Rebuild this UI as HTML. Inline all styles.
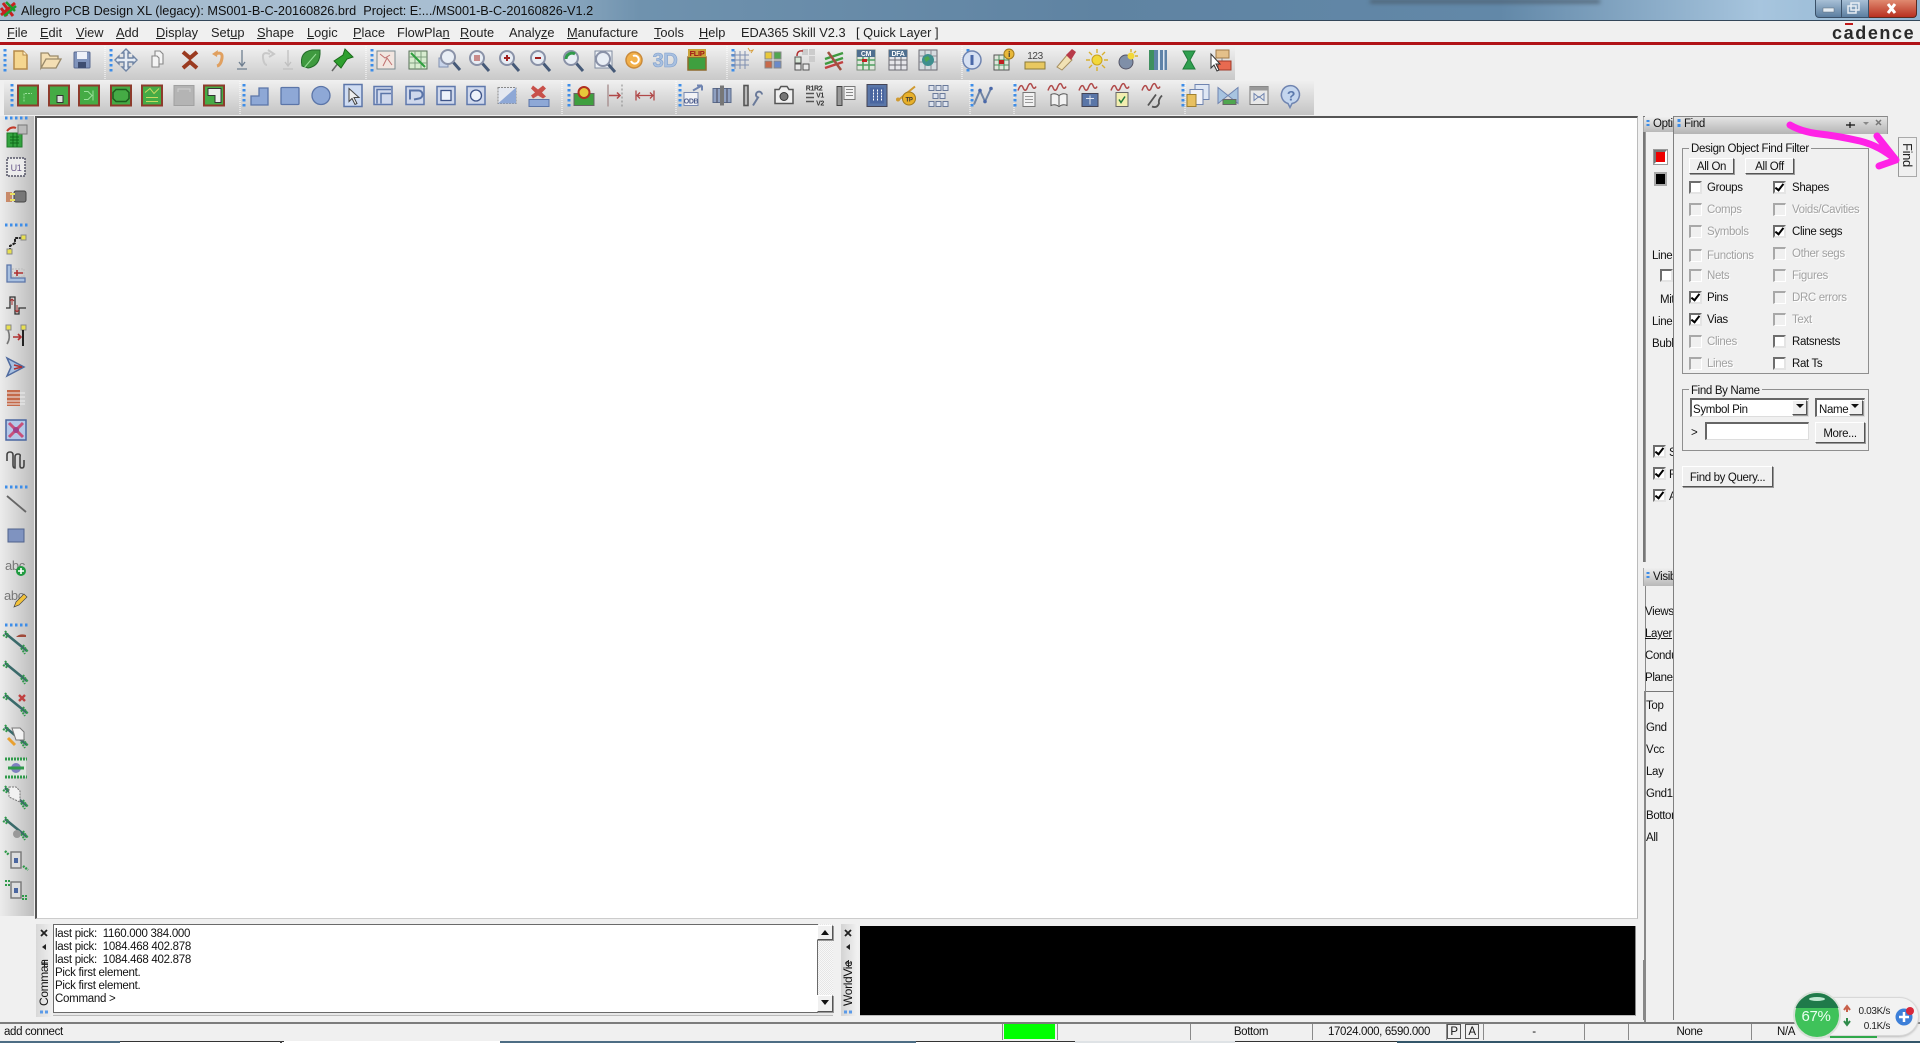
<!DOCTYPE html>
<html><head><meta charset="utf-8"><title>Allegro PCB Design XL</title>
<style>
html,body{margin:0;padding:0;width:1920px;height:1043px;overflow:hidden;background:#f0f0f0}
body{position:relative;font:11.5px/14px "Liberation Sans",sans-serif;letter-spacing:-.35px;color:#111}
div,span.a{position:absolute;box-sizing:border-box}
.t{position:absolute;white-space:nowrap;line-height:14px;margin-top:1px}
.d{color:#a2a2a2;text-shadow:1px 1px 0 #fff}
.c{position:absolute;width:13px;height:13px;background:#fff;border:2px solid;border-color:#6e6e6e #e4e4e4 #e4e4e4 #6e6e6e}
.x{background:#f0f0f0;border-color:#a8a8a8 #fff #fff #a8a8a8;border-width:2px 1px 1px 2px}
.k::after{content:"";position:absolute;left:2px;top:-1px;width:3px;height:7px;border:solid #000;border-width:0 2px 2px 0;transform:rotate(38deg)}
.b{position:absolute;background:#f0f0f0;border:1px solid;border-color:#fff #555 #555 #fff;box-shadow:1px 1px 0 #999;text-align:center;line-height:16px}
.g{position:absolute;border:1px solid #8f8f8f}
.l{position:absolute;background:#f0f0f0;padding:0 2px;white-space:nowrap;line-height:14px;margin-top:1px}
.in{position:absolute;background:#fff;border:1px solid;border-color:#666 #ddd #ddd #666;border-width:2px 1px 1px 2px}
.m{position:absolute;top:25px;font-size:12.8px;line-height:15px;letter-spacing:0;white-space:nowrap;color:#222}
.s{position:absolute;top:1024px;height:16px;text-align:center;line-height:16px;white-space:nowrap}
.v{position:absolute;top:1024px;width:1px;height:16px;background:#8a8a8a}
u{text-decoration:underline}
</style></head><body>

<!-- title bar -->
<div style="left:0;top:0;width:1920px;height:21px;background:linear-gradient(90deg,#a3b9cc 0,#a9bfd2 480px,#6f92ae 640px,#5f83a2 1100px,#6288a8 1500px,#a7c5de 1760px,#8fb3d0 1920px);border-bottom:1px solid #33475a"></div>
<div style="left:1370px;top:0;width:230px;height:3px;background:#4a5a68;filter:blur(2px)"></div>
<div class="t" style="left:21px;top:3px;font-size:12.7px;letter-spacing:0;color:#111">Allegro PCB Design XL (legacy): MS001-B-C-20160826.brd&nbsp; Project: E:.../MS001-B-C-20160826-V1.2</div>
<svg style="position:absolute;left:0;top:0" width="18" height="20"><path d="M1 15L15 3M3 3l10 13M1 8l6 8" stroke="#c82020" stroke-width="3" fill="none"/><path d="M4 16L16 6M6 2l9 9" stroke="#1c9c2c" stroke-width="2.5" fill="none"/></svg>
<div style="left:1815px;top:0;width:27px;height:18px;background:linear-gradient(#a8c0d6,#5c7ea0);border:1px solid #3a5068;border-top:0;border-radius:0 0 0 4px"></div>
<div style="left:1842px;top:0;width:27px;height:18px;background:linear-gradient(#a8c0d6,#5c7ea0);border:1px solid #3a5068;border-top:0;border-left:0"></div>
<div style="left:1869px;top:0;width:48px;height:18px;background:linear-gradient(#e08a70,#b83020);border:1px solid #5a2a20;border-top:0;border-left:0;border-radius:0 0 4px 0"></div>
<svg style="position:absolute;left:1815px;top:0" width="102" height="18"><rect x="8" y="8" width="11" height="4" fill="#e4ecf3" stroke="#5a6a7a" stroke-width=".5"/><rect x="33" y="6" width="8" height="7" fill="none" stroke="#e8eef4" stroke-width="1.5"/><rect x="36" y="3" width="8" height="7" fill="none" stroke="#e8eef4" stroke-width="1.5"/><path d="M73 4l7 9M80 4l-7 9" stroke="#fff" stroke-width="3"/></svg>

<!-- menu -->
<div class="m" style="left:7px"><u>F</u>ile</div>
<div class="m" style="left:40px"><u>E</u>dit</div>
<div class="m" style="left:76px"><u>V</u>iew</div>
<div class="m" style="left:116px"><u>A</u>dd</div>
<div class="m" style="left:156px"><u>D</u>isplay</div>
<div class="m" style="left:211px">Set<u>u</u>p</div>
<div class="m" style="left:257px"><u>S</u>hape</div>
<div class="m" style="left:307px"><u>L</u>ogic</div>
<div class="m" style="left:353px"><u>P</u>lace</div>
<div class="m" style="left:397px">FlowPla<u>n</u></div>
<div class="m" style="left:460px"><u>R</u>oute</div>
<div class="m" style="left:509px">Analy<u>z</u>e</div>
<div class="m" style="left:567px"><u>M</u>anufacture</div>
<div class="m" style="left:654px"><u>T</u>ools</div>
<div class="m" style="left:699px"><u>H</u>elp</div>
<div class="m" style="left:741px">EDA365 Skill V2.3</div>
<div class="m" style="left:856px">[ Quick Layer ]</div>
<div class="t" style="left:1832px;top:22px;font-size:18px;line-height:20px;font-weight:bold;letter-spacing:1.6px;color:#2a2a2a">cadence</div>
<div style="left:1845px;top:23px;width:8px;height:2px;background:#c01818"></div>
<div style="left:0;top:42px;width:1920px;height:3px;background:#b01217"></div>

<!-- toolbars background -->
<div style="left:0;top:46px;width:1235px;height:34px;background:linear-gradient(#f1f1f1,#c9c9c9)"></div>
<div style="left:4px;top:81px;width:1310px;height:34px;background:linear-gradient(#efefef,#c4c4c4)"></div>
<div style="left:0;top:116px;width:34px;height:800px;background:linear-gradient(90deg,#ececec,#bdbdbd)"></div>

<!-- canvas -->
<div style="left:35px;top:116px;width:1603px;height:803px;background:#fff;border-top:2px solid #555;border-left:2px solid #555;border-right:1px solid #bbb;border-bottom:1px solid #ccc"></div>

<svg style="position:absolute;left:0;top:0;filter:blur(.35px)" width="1920" height="1043">
<defs>
<symbol id="lens" overflow="visible"><path d="M3 3l7 8" stroke="#465a78" stroke-width="3"/><circle cx="-2" cy="-2" r="7" fill="#e9eef5" stroke="#8a92a8" stroke-width="2"/></symbol>
<symbol id="gb" overflow="visible"><rect x="-10" y="-10" width="20" height="20" fill="#45ab45" stroke="#8d3b2c" stroke-width="2"/></symbol>
<symbol id="bl" overflow="visible"><rect x="-9" y="-9" width="18" height="18" fill="#cfd8ec" stroke="#5f78ac" stroke-width="1.5"/></symbol>
<symbol id="wave" overflow="visible"><path d="M-11-3q3-8 5-3t4 1q3-8 5-3t4 1" fill="none" stroke="#b04848" stroke-width="1.5"/></symbol>
<symbol id="tr" overflow="visible"><path d="M-11-9L11 9" stroke="#3a6a6a" stroke-width="2.6"/><path d="M-11-11l4 5M-13-7l5 3M7 3l5 7M5 6l4 6" stroke="#2f9a4a" stroke-width="2" stroke-dasharray="2 1" fill="none"/></symbol>
</defs>

<!-- separators -->
<g stroke="#fff" stroke-dasharray="1 1"><path d="M105 46v34M366 46v34M727 46v34M962 46v34M240 81v34M562 81v34M676 81v34M970 81v34M1014 81v34M1185 81v34"/></g>
<!-- grips -->
<g stroke="#3d8de8" stroke-width="3" stroke-dasharray="2.5 2.5"><path d="M5 49v24M111 49v24M372 49v24M733 49v24M968 49v24M12 84v24M244 84v24M569 84v24M680 84v24M972 84v24M1015 84v24M1183 84v24"/><path d="M5 118h24M5 225h24M5 487h24M5 625h24"/></g>

<!-- ROW 1 -->
<g transform="translate(20,60)"><path d="M-6-9h9l4 4v14H-6z" fill="#f5d68f" stroke="#b58a4a" stroke-width="1.5"/><path d="M3-9v4h4" fill="#fff3d0" stroke="#b58a4a"/></g>
<g transform="translate(51,60)"><path d="M-10 8V-7h7l2 3h8v3H-5L-10 8zM-10 8h15l5-9H-5z" fill="#f4dfb4" stroke="#9a8a6a" stroke-width="1.3"/></g>
<g transform="translate(82,60)"><rect x="-8" y="-8" width="16" height="16" rx="1" fill="#7f93bb" stroke="#5a6a90"/><rect x="-5" y="-8" width="10" height="7" fill="#eef1f8"/><rect x="-4" y="2" width="8" height="6" fill="#3e4d70"/></g>
<g transform="translate(126,60)" fill="#e6ecf4" stroke="#6f84a4" stroke-width="1.4"><path d="M0-11l4 4H2v5h5v-2l4 4-4 4V2H2v5h2l-4 4-4-4h2V2h-5v2l-4-4 4-4v2h5v-5h-2z"/></g>
<g transform="translate(158,60)" fill="#f4f4f4" stroke="#888" stroke-width="1.1"><path d="M-3-9h5l3 3v10h-8z"/><path d="M-6-4h5l2 2v9h-7z"/></g>
<path transform="translate(190,60)" d="M-7-8l7 6 7-6M-7 8l7-6 7 6" fill="none" stroke="#9a3a20" stroke-width="4"/>
<path transform="translate(219,60)" d="M-4-6q8-3 7 4t-5 8" fill="none" stroke="#e0a060" stroke-width="3"/><path transform="translate(219,60)" d="M-1-10l-6 4 5 3z" fill="#e0a060"/>
<g transform="translate(242,60)" stroke="#6f7f90" stroke-width="1.3" fill="none"><path d="M0-10V5M-3 2l3 4 3-4M-5 9H5"/></g>
<path transform="translate(266,60)" d="M4-6q-8-3-7 4t4 7M2-10l6 4-5 3" fill="none" stroke="#c8c8c8" stroke-width="2"/>
<g transform="translate(288,60)" stroke="#c0c0c0" stroke-width="1.3" fill="none"><path d="M0-10V5M-3 2l3 4 3-4M-5 9H5"/></g>
<g transform="translate(311,60)"><path d="M-9 6q-3-14 10-16h8q1 16-12 18z" fill="#3f9a3f" stroke="#236a2a"/><path d="M-7 8L5-6" stroke="#9ae09a"/></g>
<g transform="translate(342,60)"><path d="M-10 11l7-9" stroke="#666" stroke-width="1.5"/><path d="M-8 1l9-6 2-6 8 8-6 2-6 9z" fill="#2fa02f" stroke="#1a6a1a"/></g>
<g transform="translate(386,60)"><rect x="-9" y="-9" width="18" height="18" fill="#f2e6e0" stroke="#7a8a90"/><path d="M-6-6l5 4 5-3M-3 6l4-8 5 7" stroke="#c07070" fill="none"/></g>
<g transform="translate(418,60)"><rect x="-9" y="-9" width="18" height="18" fill="#d8ecd0" stroke="#556f55"/><path d="M-9-3H9M-9 3H9M-3-9V9M3-9V9" stroke="#7f9f7f"/><path d="M-7-7L7 7" stroke="#2f9f3f" stroke-width="2"/></g>
<g transform="translate(448,60)"><rect x="-9" y="-2" width="9" height="9" fill="#c8d4ea" stroke="#7f8fb0"/><use href="#lens" x="2" y="-1"/></g>
<g transform="translate(479,60)"><use href="#lens"/><rect x="-5" y="-5" width="6" height="6" fill="#c88a8a"/></g>
<g transform="translate(509,60)"><use href="#lens"/><path d="M-5-2h6M-2-5v6" stroke="#a02020" stroke-width="2"/></g>
<g transform="translate(540,60)"><use href="#lens"/><path d="M-5-2h6" stroke="#a02020" stroke-width="2"/></g>
<g transform="translate(573,60)"><use href="#lens"/><path d="M-7-1a6 6 0 0 1 9-5" stroke="#2f9a4a" stroke-width="3" fill="none"/></g>
<g transform="translate(604,60)"><rect x="-9" y="-9" width="17" height="17" fill="#eef1f6" stroke="#7f8a9f"/><use href="#lens" x="1" y="1"/></g>
<g transform="translate(634,60)"><circle r="8" fill="#f2b04a" stroke="#c98a3a" stroke-width="1.5"/><path d="M-3 1a4 4 0 1 0 2-5" stroke="#fff" stroke-width="2" fill="none"/></g>
<text x="665" y="67" font-family="Liberation Sans" font-size="20" font-weight="bold" fill="#a8c0e0" stroke="#7f9fcc" stroke-width=".6" text-anchor="middle">3D</text>
<g transform="translate(697,60)"><rect x="-9" y="-3" width="18" height="13" fill="#3f9f3f" stroke="#8d6a2c" stroke-width="1.5"/><rect x="-9" y="-11" width="18" height="8" fill="#c9a33a"/><text y="-4" font-family="Liberation Sans" font-size="7.5" font-weight="bold" fill="#a01818" text-anchor="middle">FLIP</text></g>
<g transform="translate(741,60)" stroke="#7f8fb0" fill="none"><path d="M-10-5H8M-10 0H8M-10 5H8M-6-9V9M-1-9V9M4-9V9"/><path d="M7-12l2 3 3-1-2 3" stroke="#d8a040"/></g>
<g transform="translate(773,60)"><rect x="-8" y="-8" width="7" height="7" fill="#e8c83a" stroke="#888"/><rect x="1" y="-8" width="7" height="7" fill="#4fa64f" stroke="#888"/><rect x="-8" y="1" width="7" height="7" fill="#c86a4a" stroke="#888"/><rect x="1" y="1" width="7" height="7" fill="#6a8ac8" stroke="#888"/></g>
<g transform="translate(803,60)"><rect x="-1" y="-11" width="6" height="6" fill="#ccc"/><rect x="6" y="-11" width="6" height="6" fill="#ccc"/><rect x="6" y="-4" width="6" height="6" fill="#ccc"/><rect x="-8" y="-3" width="6" height="6" fill="#d8e8d8" stroke="#555"/><rect x="0" y="4" width="6" height="6" fill="#e8e8e8" stroke="#555"/><rect x="-8" y="4" width="6" height="6" fill="#e8e8e8" stroke="#555"/><path d="M-6-4q0-6 6-5" stroke="#b03030" fill="none" stroke-width="1.5"/></g>
<g transform="translate(834,60)" fill="none" stroke-width="2.5"><path d="M-9-1L9-7M-9 4L9-2" stroke="#3f9a3f"/><path d="M-9 8L9 2" stroke="#c04040"/><path d="M-6-8L7 10" stroke="#a05040"/></g>
<g transform="translate(866,60)"><rect x="-9" y="-10" width="18" height="20" fill="#dfe7dc" stroke="#7a8a7a"/><rect x="-9" y="-10" width="18" height="7" fill="#4f6f8f"/><text y="-4" font-family="Liberation Sans" font-size="7" font-weight="bold" fill="#fff" text-anchor="middle">CM</text><path d="M-9 0H9M-9 5H9M-3-3V10M3-3V10" stroke="#4f9f5f" stroke-width="1.5"/><rect x="-4" y="-1" width="5" height="3" fill="#c02020"/></g>
<g transform="translate(898,60)"><rect x="-9" y="-10" width="18" height="20" fill="#e6e6ea" stroke="#6a6a72"/><rect x="-9" y="-10" width="18" height="7" fill="#4f6f8f"/><text y="-4" font-family="Liberation Sans" font-size="7" font-weight="bold" fill="#fff" text-anchor="middle">DFA</text><path d="M-9 0H9M-9 5H9M-3-3V10M3-3V10" stroke="#6a6a72"/></g>
<g transform="translate(928,60)"><rect x="-9" y="-10" width="18" height="20" fill="#d6dce0" stroke="#6a6a72"/><path d="M-9-4H9M-9 2H9M-3-10V10M3-10V10" stroke="#8a8a92"/><circle r="6" fill="#3f8f8f"/><path d="M-4-2l4-2 2 3-4 3z" fill="#4fa64f"/></g>
<g transform="translate(972,60)"><circle r="9" fill="#d6e0f2" stroke="#6f84b0" stroke-width="1.5"/><rect x="-1.5" y="-5" width="3" height="10" fill="#4a68a8"/></g>
<g transform="translate(1003,60)"><rect x="-9" y="-5" width="15" height="15" fill="#dfe6dc" stroke="#555"/><path d="M-9 0H6M-9 5H6M-4-5V10M1-5V10" stroke="#4f8f5f"/><rect x="-4" y="0" width="5" height="4" fill="#c02020"/><circle cx="6" cy="-6" r="5" fill="#e8b83a" stroke="#a07a20"/><text x="6" y="-3" font-family="Liberation Sans" font-size="8" font-weight="bold" fill="#333" text-anchor="middle">i</text></g>
<g transform="translate(1035,60)"><text y="-1" font-family="Liberation Sans" font-size="10" fill="#444" text-anchor="middle">123</text><rect x="-10" y="2" width="20" height="7" fill="#e8c860" stroke="#8a7a3a"/></g>
<g transform="translate(1065,60)"><path d="M-8 7L2-5l5 5-10 10z" fill="#f2e2b4" stroke="#a89060"/><path d="M1-5L7-11l4 3-5 8z" fill="#b83a4a"/></g>
<g transform="translate(1097,60)"><circle r="5" fill="#f2d83a" stroke="#c8a020"/><path d="M0-11v4M0 7v4M-11 0h4M7 0h4M-8-8l3 3M5 5l3 3M8-8l-3 3M-5 5l-3 3" stroke="#d8b030" stroke-width="1.4"/></g>
<g transform="translate(1128,60)"><circle cx="-2" cy="2" r="7" fill="#7f8fa8" stroke="#556"/><circle cx="3" cy="-4" r="3.5" fill="#f2d83a"/><path d="M3-11v3M10-4H7M8-9l-2 2" stroke="#d8b030" stroke-width="1.4"/></g>
<g transform="translate(1158,60)"><rect x="-9" y="-10" width="18" height="20" fill="#5f83a8"/><rect x="-9" y="-10" width="5" height="20" fill="#3f8f5f"/><rect x="0" y="-10" width="2" height="20" fill="#dfe8f2"/><rect x="5" y="-10" width="1.5" height="20" fill="#dfe8f2"/></g>
<path transform="translate(1189,60)" d="M-6-9H6L1 0l5 9H-6l5-9z" fill="#2f9f4f" stroke="#1f7a3a"/>
<g transform="translate(1221,60)"><rect x="-5" y="-10" width="13" height="8" fill="#e4c08a" stroke="#a07a4a"/><path d="M1-2v3" stroke="#888"/><rect x="-3" y="1" width="13" height="9" fill="#e86a50" stroke="#a03a2a"/><path d="M-10-6V8l3-3 3 6 2-1-3-6h4z" fill="#fff" stroke="#333"/></g>

<!-- ROW 2 -->
<g transform="translate(28,95.5)"><use href="#gb"/><path d="M-4 6v-8h8" stroke="#9be09b" fill="none" stroke-dasharray="2 1"/></g>
<g transform="translate(59,95.5)"><use href="#gb"/><rect x="-2" y="0" width="6" height="7" fill="#ddd" stroke="#333"/></g>
<g transform="translate(89,95.5)"><use href="#gb"/><path d="M-5-4h4l4 4-4 4h-4M4-5v10" stroke="#9be09b" fill="none"/></g>
<g transform="translate(121,95.5)"><use href="#gb"/><path d="M-5-6H5l3 3v6l-3 3H-5l-3-3v-6z" stroke="#1e5e1e" fill="none" stroke-width="1.5"/></g>
<g transform="translate(152,95.5)"><use href="#gb"/><path d="M-7-3l5-4 4 5 5-5M-6 2h12M-6 6h12" stroke="#c8d860" fill="none"/></g>
<rect x="174" y="85.5" width="20" height="20" fill="#b4b4b4" stroke="#a0a0a0"/><path d="M178 92v-3h12v3" fill="none" stroke="#cfcfcf"/>
<g transform="translate(214,95.5)"><use href="#gb"/><path d="M-6-7H7V7H1V0H-6z" fill="#eee" stroke="#333"/></g>
<path d="M251 105v-9h8v-8h9v17z" fill="#8ea8d6" stroke="#5b75a8" stroke-width="1.3"/>
<g transform="translate(290,95.5)"><rect x="-9" y="-8" width="18" height="17" rx="1" fill="#8ea8d6" stroke="#5b75a8" stroke-width="1.3"/></g>
<circle cx="321" cy="95.5" r="9" fill="#8ea8d6" stroke="#5b75a8" stroke-width="1.3"/>
<g transform="translate(353,95.5)"><rect x="-9" y="-11" width="18" height="22" fill="#cfdcf2" stroke="#5b75a8" stroke-width="1.5"/><path d="M-4-7L-4 6l3-3 3 6 2-1-3-6h5z" fill="#eee" stroke="#444"/></g>
<g transform="translate(383,95.5)"><use href="#bl"/><path d="M-6 8V-6H8M-2 8V-2H8" fill="none" stroke="#5b75a8" stroke-width="1.5"/></g>
<g transform="translate(415,95.5)"><use href="#bl"/><path d="M-5 4V-5h8a4 4 0 0 1 1 8l-5 1" fill="none" stroke="#5b75a8" stroke-width="2"/></g>
<g transform="translate(446,95.5)"><use href="#bl"/><rect x="-5" y="-5" width="10" height="10" fill="#eef2fa" stroke="#3e5488" stroke-width="1.3"/></g>
<g transform="translate(476,95.5)"><use href="#bl"/><circle r="5.5" fill="#eef2fa" stroke="#3e5488" stroke-width="1.3"/></g>
<g transform="translate(507,95.5)"><path d="M-9-8H9V8H-9z" fill="#e4e8f0" stroke="#888" stroke-dasharray="2 1"/><path d="M9-8V8H-9z" fill="#8ea8d6"/></g>
<g transform="translate(539,95.5)"><rect x="-10" y="4" width="20" height="7" fill="#8ea8d6" stroke="#5b75a8"/><path d="M-6-10l5 4 5-4 3 3-4 4 4 4-3 2-5-3-5 3-2-3 4-3-4-4z" fill="#c8504a"/></g>
<g transform="translate(584,95.5)"><rect x="-10" y="-2" width="20" height="12" fill="#3f9f3f" stroke="#666"/><circle cy="-3" r="5.5" fill="#e8c83a" stroke="#b03020" stroke-width="2"/></g>
<g transform="translate(615,95.5)" stroke="#b04848" fill="none"><path d="M-7-11V11" stroke="#a89090" stroke-width="1.4"/><path d="M7-11V11" stroke="#888" stroke-dasharray="2 2"/><path d="M-6 0H5M2-3l3 3-3 3" stroke-width="1.5"/></g>
<g transform="translate(645,95.5)" stroke="#b04848" fill="none" stroke-width="1.3"><path d="M-9-5V5M9-5V5M-8 0H8M-5-3l-3 3 3 3M5-3l3 3-3 3"/></g>
<g transform="translate(692,95.5)"><rect x="-8" y="-3" width="14" height="13" fill="#f2f2f6" stroke="#7a8ab0"/><text x="-1" y="8" font-family="Liberation Sans" font-size="7" font-weight="bold" fill="#4a5a8a" text-anchor="middle">ODB</text><path d="M1-5l9-5M10-10v5M10-10H5" stroke="#6f84b0" stroke-width="2" fill="none"/></g>
<g transform="translate(722,95.5)"><rect x="-9" y="-7" width="18" height="14" fill="#8fa0c0" stroke="#5a6a8a"/><rect x="-2" y="-10" width="4" height="20" fill="#777"/><path d="M-5-7V7M5-7V7" stroke="#445"/></g>
<g transform="translate(753,95.5)" fill="none" stroke="#555" stroke-width="1.6"><rect x="-9" y="-10" width="4" height="20" fill="#bbb"/><path d="M0 10l5-8a3 3 0 1 1 4-3" stroke="#6a7a9a" stroke-width="2"/></g>
<g transform="translate(784,95.5)"><path d="M-9-6h4l2-3h6l2 3h4V8H-9z" fill="#f0f0f0" stroke="#555" stroke-width="1.5"/><circle cy="1" r="4" fill="#777" stroke="#333"/></g>
<g transform="translate(814,95.5)"><text x="0" y="-5" font-family="Liberation Sans" font-size="7" font-weight="bold" fill="#333" text-anchor="middle">R1R2</text><path d="M-8-2H0M-8 2H0M-8 6H0" stroke="#555" stroke-width="1.5"/><text x="6" y="2" font-family="Liberation Sans" font-size="7" font-weight="bold" fill="#333" text-anchor="middle">V1</text><text x="6" y="10" font-family="Liberation Sans" font-size="7" font-weight="bold" fill="#333" text-anchor="middle">V2</text></g>
<g transform="translate(846,95.5)"><rect x="-9" y="-9" width="5" height="19" fill="#999" stroke="#444"/><rect x="-2" y="-9" width="11" height="13" fill="#f2f2f2" stroke="#777"/><path d="M0-6h7M0-3h7M0 0h7" stroke="#888"/></g>
<g transform="translate(877,95.5)"><rect x="-10" y="-11" width="20" height="22" fill="#5a76a8" stroke="#445"/><rect x="-7" y="-8" width="14" height="16" fill="#4a66a0"/><path d="M-4-5h1M0-5h1M4-5h1M-4-2h1M0-2h1M4-2h1M-4 1h1M0 1h1M4 1h1M-4 4h1M0 4h1M4 4h1" stroke="#fff" stroke-width="2"/></g>
<g transform="translate(907,95.5)"><path d="M-8 4l16-13" stroke="#d09a30" stroke-width="2"/><circle cx="-9" cy="4" r="2" fill="#d09a30"/><circle cx="2" cy="3" r="6.5" fill="#e8b02a" stroke="#a07a20"/><text x="2" y="6" font-family="Liberation Sans" font-size="6" font-weight="bold" fill="#333" text-anchor="middle">TP</text></g>
<g transform="translate(938,95.5)" fill="#dfe4ee" stroke="#6a7a9a"><rect x="-9" y="-10" width="5" height="5"/><rect x="-2" y="-10" width="5" height="5"/><rect x="5" y="-10" width="5" height="5"/><rect x="-5" y="-2" width="5" height="5"/><rect x="2" y="-2" width="5" height="5"/><rect x="-9" y="6" width="5" height="5"/><rect x="-2" y="6" width="5" height="5"/><rect x="5" y="6" width="5" height="5"/></g>
<g transform="translate(983,95.5)"><path d="M-9 9l6-14 5 11 6-13" fill="none" stroke="#6f84a4" stroke-width="2"/><circle cx="-3" cy="-5" r="1.8" fill="#4a68a8"/><circle cx="2" cy="6" r="1.8" fill="#4a68a8"/><circle cx="8" cy="-7" r="1.8" fill="#4a68a8"/></g>
<g transform="translate(1029,95.5)"><use href="#wave" y="-2"/><rect x="-6" y="-3" width="12" height="14" fill="#f2f2f2" stroke="#777"/><path d="M-4 1h8M-4 4h8M-4 7h8" stroke="#999"/></g>
<g transform="translate(1059,95.5)"><use href="#wave" y="-2"/><path d="M-8-1q4-2 8 1q4-3 8-1V10q-4-2-8 1q-4-3-8-1z" fill="#f2f2f2" stroke="#555"/><path d="M0 0v10" stroke="#555"/></g>
<g transform="translate(1090,95.5)"><use href="#wave" y="-2"/><rect x="-8" y="-2" width="16" height="13" fill="#5a76a8" stroke="#445"/><path d="M-4 3h8M0 0v9" stroke="#dfe4ee"/></g>
<g transform="translate(1122,95.5)"><use href="#wave" y="-2"/><rect x="-6" y="-3" width="12" height="14" fill="#f2eeb0" stroke="#666"/><path d="M-3 4l2 3 4-6" stroke="#1f7a3a" fill="none" stroke-width="1.5"/></g>
<g transform="translate(1153,95.5)"><use href="#wave" y="-2"/><path d="M-5 10L3-1M-1 11q5 2 7-3-1-4 3-8" stroke="#555" fill="none" stroke-width="1.8"/></g>
<g transform="translate(1198,95.5)"><rect x="-3" y="-11" width="14" height="15" fill="#dfe7f4" stroke="#6f84b0"/><rect x="-8" y="-6" width="13" height="15" fill="#f2f2f6" stroke="#6f84b0"/><rect x="-11" y="-1" width="9" height="12" fill="#e8c060" stroke="#a08030"/></g>
<g transform="translate(1228,95.5)"><path d="M-10-8L0 0-10 8zM10-8L0 0 10 8z" fill="#a8c4e0" stroke="#6f84b0"/><rect x="-5" y="4" width="13" height="5" fill="#4fa64f" stroke="#666"/></g>
<g transform="translate(1259,95.5)"><rect x="-9" y="-9" width="18" height="18" fill="#e8e8e8" stroke="#777"/><rect x="-9" y="-9" width="18" height="4" fill="#999"/><path d="M-5-2l5 4 5-4v7L0 1-5 5z" fill="none" stroke="#6f84b0"/></g>
<g transform="translate(1291,95.5)"><path d="M-9-4a9 9 0 1 1 10 12l-2 4-2-4a9 9 0 0 1-6-12z" fill="#c4d6ee" stroke="#6f84b0" stroke-width="1.5"/><text y="5" font-family="Liberation Sans" font-size="14" font-weight="bold" fill="#5a78ac" text-anchor="middle">?</text></g>

<!-- LEFT TOOLBAR -->
<g transform="translate(16,137)"><path d="M-9-4h15v14H-9z" fill="#33a43f" stroke="#1f7a2a"/><path d="M-6 0h9M-6 3h9M-6 6h9M-3-4V10M1-4V10" stroke="#0f6a1a"/><path d="M-9-6q4-5 9-3" stroke="#c23a2a" fill="none" stroke-width="2"/><rect x="2" y="-12" width="9" height="9" fill="#bbb" stroke="#777"/></g>
<g transform="translate(16,167)"><rect x="-9" y="-9" width="18" height="18" fill="#ececec" stroke="#556" stroke-dasharray="2 1" stroke-width="1.5"/><text y="4" font-family="Liberation Sans" font-size="9" fill="#6a5a8a" text-anchor="middle">U1</text></g>
<g transform="translate(16,197)"><rect x="-10" y="-5" width="6" height="10" fill="#c88a6a"/><rect x="-2" y="-6" width="12" height="11" rx="2" fill="#777" stroke="#444"/><path d="M-6-3h5M-6 3h5" stroke="#e8e060" stroke-width="2"/></g>
<g transform="translate(16,244)"><path d="M-6 7v-5l5-3v-5h6" stroke="#222" stroke-width="2" fill="none" stroke-dasharray="3 1"/><rect x="-9" y="5" width="5" height="5" fill="#e8e050" stroke="#888"/><rect x="5" y="-9" width="5" height="5" fill="#e8e050" stroke="#888"/></g>
<g transform="translate(16,274)"><path d="M-9-9V8H9V4H-5V-9z" fill="#a8c0e0" stroke="#5b75a8" stroke-width="1.3"/><path d="M-4-5h12v8H-4z" fill="none" stroke="#bbb" stroke-dasharray="2 1"/><path d="M-2-1H7M1-4v6" stroke="#b03030" stroke-width="1.6"/></g>
<g transform="translate(16,305)" fill="none" stroke="#333" stroke-width="1.3"><path d="M-10 3h4V-8h5V9h4V3h7"/><path d="M-4 0V-6M-6-4l2-2 2 2M1 7V0M-1 5l2 2 2-2" stroke="#a03030" stroke-width="1"/></g>
<g transform="translate(16,336)"><rect x="-10" y="-11" width="5" height="5" fill="#e8e050" stroke="#888"/><rect x="5" y="-11" width="5" height="5" fill="#e8e050" stroke="#888"/><path d="M-8-6q3 8-1 14" stroke="#777" stroke-width="1.6" fill="none"/><path d="M7-6V10" stroke="#222" stroke-width="2"/><path d="M-3 1H5M2-2l3 3-3 3" stroke="#b03030" stroke-width="1.6" fill="none"/></g>
<g transform="translate(16,367)"><path d="M-9-9l17 9-17 9 4-9z" fill="#a8c0e0" stroke="#4f6a9f" stroke-width="1.5"/><path d="M-2-2l8 2-8 2" fill="none" stroke="#b03030" stroke-width="1.6"/></g>
<g transform="translate(16,398)"><rect x="-9" y="-8" width="13" height="16" fill="#c46a4a"/><path d="M-9-5H9M-9-1H9M-9 3H9M-9 6H9" stroke="#eee" stroke-width="1"/></g>
<g transform="translate(16,430)"><rect x="-10" y="-10" width="20" height="20" fill="#b4c8e8" stroke="#4a66a0" stroke-width="1.5"/><path d="M-7-7l14 14M7-7L-7 7" stroke="#c8507a" stroke-width="3"/><circle r="3" fill="#a0408a"/></g>
<g transform="translate(16,459)" fill="none" stroke="#444" stroke-width="1.6"><path d="M-9 2v-6q0-3 3-3t3 3V6q0 3 2 3V-2q0-3 3-3t2 3v9q0 2 2 2t2-3V1"/></g>
<path d="M7 504L26 520" stroke="#666" stroke-width="1.8" transform="translate(0,-8)"/>
<rect x="8" y="529" width="16" height="13" fill="#7f93c0" stroke="#4f628c" stroke-width="1"/>
<text x="15" y="570" font-family="Liberation Sans" font-size="13" fill="#777" text-anchor="middle">abc</text><circle cx="21" cy="571" r="5" fill="#1f9a3f"/><path d="M18 571h6M21 568v6" stroke="#fff" stroke-width="1.6"/>
<text x="14" y="600" font-family="Liberation Sans" font-size="13" fill="#777" text-anchor="middle">abc</text><path d="M14 607l2-5 8-8 3 3-8 8z" fill="#f2c23a" stroke="#444" stroke-width=".7"/>
<use href="#tr" x="16" y="642"/><path d="M16 637q4-4 10-2v2z" fill="#a04a3a"/>
<use href="#tr" x="16" y="672"/>
<use href="#tr" x="16" y="704"/><path d="M19 695l6 6M25 695l-6 6" stroke="#c04040" stroke-width="2.4"/>
<use href="#tr" x="16" y="736"/><path d="M12 728h8l4 4v8h-8z" fill="#f2f2f2" stroke="#777"/><path d="M8 738l7 7" stroke="#e8a030" stroke-width="3"/>
<g transform="translate(16,768)"><rect x="-10" y="-9" width="20" height="18" fill="#dfe4e0"/><path d="M-11-9H11M-11 9H11" stroke="#2f9a4a" stroke-width="3" stroke-dasharray="2 1"/><circle r="5" fill="#7f7fc0"/><path d="M-8 0H8" stroke="#2f9a4a" stroke-width="3"/></g>
<use href="#tr" x="16" y="797"/><path d="M9 787h7l4 4v11L9 797z" fill="#f2f2f2" stroke="#777" stroke-dasharray="2 1"/>
<use href="#tr" x="16" y="828"/><circle cx="17" cy="834" r="4" fill="#999"/>
<g transform="translate(16,860)"><path d="M-11-9l4 4M7 6l5 4" stroke="#2f9a4a" stroke-width="2.4" stroke-dasharray="2 1"/><rect x="-5" y="-8" width="10" height="16" fill="#ddd" stroke="#777" stroke-width="1.4"/><rect x="-2" y="-2" width="4" height="5" fill="#4a66a0"/></g>
<g transform="translate(16,890)"><path d="M-11-9h6M6 6h6M-11-5h6M6 9h6" stroke="#2f9a4a" stroke-width="2" stroke-dasharray="2 1"/><rect x="-5" y="-8" width="10" height="16" fill="#ddd" stroke="#777" stroke-width="1.4"/><rect x="-2" y="-2" width="4" height="5" fill="#4a66a0"/></g>
</svg>

<!-- bottom: command -->
<div style="left:36px;top:924px;width:17px;height:93px;background:linear-gradient(90deg,#d8d8d8,#f0f0f0)"></div>
<div style="left:53px;top:924px;width:765px;height:89px;background:#fff;border:1px solid #6a6a6a"></div>
<div class="t" style="left:55px;top:927px;line-height:13px;letter-spacing:-.28px">last pick:&nbsp; 1160.000 384.000<br>last pick:&nbsp; 1084.468 402.878<br>last pick:&nbsp; 1084.468 402.878<br>Pick first element.<br>Pick first element.<br>Command &gt;</div>
<div style="left:818px;top:924px;width:15px;height:90px;background:repeating-conic-gradient(#f8f8f8 0 25%,#e6e6e6 0 50%) 0 0/2px 2px"></div>
<div class="b" style="left:817px;top:925px;width:16px;height:15px"></div>
<div class="b" style="left:817px;top:995px;width:16px;height:17px"></div>
<div style="left:53px;top:1013px;width:780px;height:3px;background:#e8e8e8;border-bottom:1px solid #bbb"></div>
<div style="left:841px;top:924px;width:17px;height:92px;background:linear-gradient(90deg,#d4d4d4,#f2f2f2)"></div>
<div style="left:860px;top:926px;width:776px;height:90px;background:#000;border-right:1px solid #888;border-bottom:1px solid #bbb"></div>

<svg style="position:absolute;left:0;top:0" width="1920" height="1043">
<g font-family="Liberation Sans" font-size="12" fill="#111">
<text transform="translate(48,1006) rotate(-90)">Comman</text>
<text transform="translate(852,1006) rotate(-90)">WorldVie</text>
</g>
<g fill="#222"><path d="M41 930l6 6M47 930l-6 6" stroke="#222" stroke-width="1.8"/><path d="M46 944v6l-4-3z"/><path d="M41 963h7M44.5 960v7" stroke="#222"/>
<path d="M845 930l6 6M851 930l-6 6" stroke="#222" stroke-width="1.8"/><path d="M850 944v6l-4-3z"/><path d="M845 963h7M848.5 960v7" stroke="#222"/></g>
<path d="M40 1012h10M844 1012h10" stroke="#5a9ae8" stroke-width="3" stroke-dasharray="3 2"/>
<path d="M821 935l4-5 4 5z M821 1000h8l-4 5z" fill="#111"/>
</svg>

<!-- opt / vis panels -->
<div style="left:1643px;top:116px;width:2px;height:446px;background:#777"></div>
<div style="left:1643px;top:117px;width:31px;height:15px;background:linear-gradient(#efefef,#b8b8b8);border-left:1px solid #aaa"></div>
<div style="left:1645px;top:132px;width:29px;height:430px;background:#f0f0f0;border-left:1px solid #999"></div>
<div class="t" style="left:1653px;top:116px">Opti</div>
<div class="t" style="left:1652px;top:248px">Line</div>
<div class="c" style="left:1660px;top:269px;width:13px"></div>
<div class="t" style="left:1660px;top:292px">Mit</div>
<div class="t" style="left:1652px;top:314px">Line</div>
<div class="t" style="left:1652px;top:336px">Bubl</div>
<div style="left:1654px;top:150px;width:13px;height:14px;background:#e00;border:2px solid;border-color:#777 #fff #fff #777;box-shadow:0 0 0 1px #999"></div>
<div style="left:1654px;top:172px;width:13px;height:14px;background:#000;border:2px solid #aaa"></div>
<div class="c k" style="left:1653px;top:445px"></div>
<div class="c k" style="left:1653px;top:467px"></div>
<div class="c k" style="left:1653px;top:489px"></div>
<div class="t" style="left:1669px;top:445px">S</div>
<div class="t" style="left:1669px;top:467px">F</div>
<div class="t" style="left:1669px;top:489px">A</div>
<div style="left:1643px;top:568px;width:31px;height:18px;background:linear-gradient(#efefef,#b8b8b8);border-left:1px solid #aaa"></div>
<div class="t" style="left:1653px;top:569px;overflow:hidden;width:20px">Visib</div>
<div style="left:1645px;top:586px;width:1px;height:436px;background:#888"></div>
<div class="t" style="left:1645px;top:604px;overflow:hidden;width:28px">Views</div>
<div class="t" style="left:1645px;top:626px;overflow:hidden;width:28px"><u>Layer</u></div>
<div class="t" style="left:1645px;top:648px;overflow:hidden;width:28px">Condu</div>
<div class="t" style="left:1645px;top:670px;overflow:hidden;width:28px">Plane:</div>
<div style="left:1644px;top:691px;width:30px;height:1px;background:#777"></div>
<div style="left:1644px;top:691px;width:2px;height:331px;background:#888"></div>
<div class="t" style="left:1646px;top:698px">Top</div>
<div class="t" style="left:1646px;top:720px">Gnd</div>
<div class="t" style="left:1646px;top:742px">Vcc</div>
<div class="t" style="left:1646px;top:764px">Lay</div>
<div class="t" style="left:1646px;top:786px">Gnd1</div>
<div class="t" style="left:1646px;top:808px;overflow:hidden;width:27px">Bottom</div>
<div class="t" style="left:1646px;top:830px">All</div>
<div style="left:1643px;top:960px;width:2px;height:60px;background:#888"></div>

<!-- Find panel -->
<div style="left:1673px;top:116px;width:246px;height:904px;background:#f0f0f0;border-left:1px solid #808080"></div>
<div style="left:1674px;top:116px;width:214px;height:18px;background:linear-gradient(#e4e4e4,#b4b4b4);border-top:1px solid #888;border-right:1px solid #999"></div>
<div class="t" style="left:1684px;top:116px">Find</div>
<div class="g" style="left:1682px;top:148px;width:187px;height:226px"></div>
<div class="l" style="left:1689px;top:141px">Design Object Find Filter</div>
<div class="b" style="left:1689px;top:158px;width:45px;height:16px">All On</div>
<div class="b" style="left:1745px;top:158px;width:49px;height:16px">All Off</div>

<div class="c" style="left:1689px;top:181px"></div><div class="t" style="left:1707px;top:180px">Groups</div>
<div class="c x" style="left:1689px;top:203px"></div><div class="t d" style="left:1707px;top:202px">Comps</div>
<div class="c x" style="left:1689px;top:225px"></div><div class="t d" style="left:1707px;top:224px">Symbols</div>
<div class="c x" style="left:1689px;top:249px"></div><div class="t d" style="left:1707px;top:248px">Functions</div>
<div class="c x" style="left:1689px;top:269px"></div><div class="t d" style="left:1707px;top:268px">Nets</div>
<div class="c k" style="left:1689px;top:291px"></div><div class="t" style="left:1707px;top:290px">Pins</div>
<div class="c k" style="left:1689px;top:313px"></div><div class="t" style="left:1707px;top:312px">Vias</div>
<div class="c x" style="left:1689px;top:335px"></div><div class="t d" style="left:1707px;top:334px">Clines</div>
<div class="c x" style="left:1689px;top:357px"></div><div class="t d" style="left:1707px;top:356px">Lines</div>

<div class="c k" style="left:1773px;top:181px"></div><div class="t" style="left:1792px;top:180px">Shapes</div>
<div class="c x" style="left:1773px;top:203px"></div><div class="t d" style="left:1792px;top:202px">Voids/Cavities</div>
<div class="c k" style="left:1773px;top:225px"></div><div class="t" style="left:1792px;top:224px">Cline segs</div>
<div class="c x" style="left:1773px;top:247px"></div><div class="t d" style="left:1792px;top:246px">Other segs</div>
<div class="c x" style="left:1773px;top:269px"></div><div class="t d" style="left:1792px;top:268px">Figures</div>
<div class="c x" style="left:1773px;top:291px"></div><div class="t d" style="left:1792px;top:290px">DRC errors</div>
<div class="c x" style="left:1773px;top:313px"></div><div class="t d" style="left:1792px;top:312px">Text</div>
<div class="c" style="left:1773px;top:335px"></div><div class="t" style="left:1792px;top:334px">Ratsnests</div>
<div class="c" style="left:1773px;top:357px"></div><div class="t" style="left:1792px;top:356px">Rat Ts</div>

<div class="g" style="left:1682px;top:389px;width:187px;height:62px"></div>
<div class="l" style="left:1689px;top:383px">Find By Name</div>
<div class="in" style="left:1690px;top:398px;width:119px;height:19px"></div>
<div class="t" style="left:1693px;top:402px">Symbol Pin</div>
<div class="b" style="left:1792px;top:400px;width:15px;height:15px"></div>
<div class="in" style="left:1815px;top:398px;width:50px;height:19px"></div>
<div class="t" style="left:1819px;top:402px">Name</div>
<div class="b" style="left:1849px;top:400px;width:14px;height:15px"></div>
<div class="t" style="left:1691px;top:425px">&gt;</div>
<div class="in" style="left:1705px;top:422px;width:104px;height:18px"></div>
<div class="b" style="left:1815px;top:422px;width:50px;height:21px;line-height:22px">More...</div>
<div class="b" style="left:1682px;top:466px;width:91px;height:21px;line-height:22px">Find by Query...</div>

<div style="left:1898px;top:137px;width:19px;height:40px;background:#f0f0f0;border:1px solid #aaa;border-left-color:#999"></div>

<!-- status bar -->
<div style="left:0;top:1022px;width:1920px;height:2px;background:#7c7c7c"></div>
<div style="left:0;top:1024px;width:1920px;height:17px;background:#f0f0f0"></div>
<div class="t" style="left:4px;top:1023px;line-height:16px">add connect</div>
<div style="left:1004px;top:1024px;width:51px;height:15px;background:#0f0"></div>
<div class="v" style="left:1002px"></div><div class="v" style="left:1057px"></div><div class="v" style="left:1190px"></div><div class="v" style="left:1312px"></div><div class="v" style="left:1446px"></div><div class="v" style="left:1483px"></div><div class="v" style="left:1584px"></div><div class="v" style="left:1628px"></div><div class="v" style="left:1751px"></div>
<div class="s" style="left:1190px;width:122px">Bottom</div>
<div class="s" style="left:1312px;width:134px">17024.000, 6590.000</div>
<div class="s" style="left:1447px;top:1024px;width:14px;border:1px solid #555;line-height:14px;height:15px">P</div>
<div class="s" style="left:1465px;top:1024px;width:14px;border:1px solid #555;line-height:14px;height:15px">A</div>
<div class="s" style="left:1484px;width:100px">-</div>
<div class="s" style="left:1628px;width:123px">None</div>
<div class="t" style="left:1777px;top:1023px;line-height:16px">N/A</div>

<!-- taskbar sliver -->
<div style="left:0;top:1041px;width:1920px;height:2px;background:#fff;border-top:1px solid #333"></div>
<div style="left:0;top:1041px;width:120px;height:2px;background:#4d6d84"></div>
<div style="left:284px;top:1041px;width:632px;height:2px;background:#fff"></div>
<div style="left:280px;top:1041px;width:2px;height:2px;background:#444"></div>
<div style="left:500px;top:1041px;width:416px;height:2px;background:#4d6d84"></div>
<div style="left:1075px;top:1041px;width:160px;height:2px;background:#dfe3e6"></div>
<div style="left:1397px;top:1041px;width:523px;height:2px;background:#33566a"></div>

<!-- network widget -->
<div style="left:1810px;top:997px;width:109px;height:39px;background:#f2f2f2;border:1px solid #d8d8d8;border-radius:20px;box-shadow:0 1px 2px #bbb"></div>
<div style="left:1830px;top:1036px;width:47px;height:2px;background:#2fa84a"></div>
<svg style="position:absolute;left:0;top:0" width="1920" height="1043">
<circle cx="1817" cy="1015" r="23" fill="#3fc25a" stroke="#d8e0d8" stroke-width="2"/>
<path d="M1795.500 1008a23 23 0 0 1 43 0z" fill="#1f7a4a"/>
<ellipse cx="1817" cy="999" rx="8" ry="2" fill="#bfe8d0"/>
<text x="1816" y="1021" font-family="Liberation Sans" font-size="15" fill="#eafff0" text-anchor="middle">67%</text>
<path d="M1847 1012v-5M1844 1010l3-4 3 4" stroke="#c8604a" stroke-width="2" fill="none"/>
<path d="M1847 1018v6M1844 1021l3 4 3-4" stroke="#2f8a4a" stroke-width="2" fill="none"/>
<text x="1890" y="1014" font-family="Liberation Sans" font-size="10" fill="#222" text-anchor="end">0.03K/s</text>
<text x="1890" y="1029" font-family="Liberation Sans" font-size="10" fill="#222" text-anchor="end">0.1K/s</text>
<circle cx="1904" cy="1017" r="8.500" fill="#3d7fd8"/>
<path d="M1899 1017h10M1904 1012v10" stroke="#fff" stroke-width="2.500"/>
<circle cx="1910" cy="1011" r="4" fill="#d8283a"/>

<!-- Find header controls + tab + arrow -->
<path d="M1846 125h4M1850 122v6M1850 125h5" stroke="#111" stroke-width="1.200" fill="none"/>
<path d="M1863 122l3 3 3-3z" fill="#888"/><path d="M1876 120l5 5M1881 120l-5 5" stroke="#777" stroke-width="1.500"/>
<path d="M1679 119v3M1679 124v3" stroke="#3d8de8" stroke-width="3"/>
<path d="M1648 120v2M1648 124v2M1648 572v2M1648 576v2" stroke="#3d8de8" stroke-width="3"/>
<path d="M1796 404l4 4 4-4zM1851 404l4 4 4-4z" fill="#111"/>
<text transform="translate(1903,143) rotate(90)" font-family="Liberation Sans" font-size="13" fill="#222">Find</text>
<path d="M1790 125q12 7 30 9t40 7q20 5 36 19l-17 6M1877 136l19 24" fill="none" stroke="#ff22e6" stroke-width="7" stroke-linecap="round" stroke-linejoin="round"/>
</svg>
</body></html>
